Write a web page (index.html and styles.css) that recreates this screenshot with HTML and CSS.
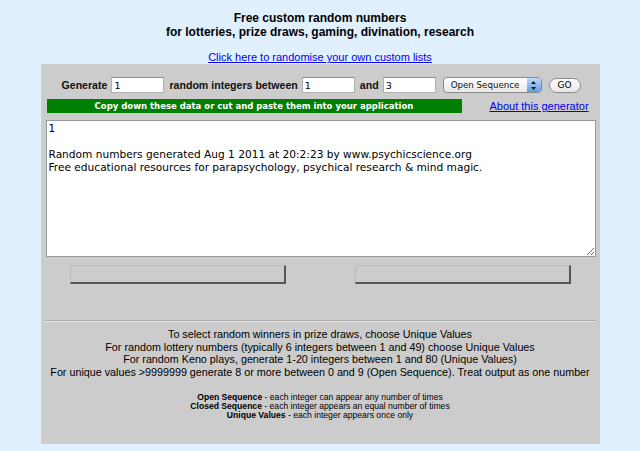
FILE: index.html
```html
<!DOCTYPE html>
<html lang="en">
<head>
  <meta charset="UTF-8">
  <title>Free custom random numbers</title>
  <link rel="stylesheet" href="styles.css">
</head>
<body>

<h1 class="title">Free custom random numbers<br>for lotteries, prize draws, gaming, divination, research</h1>

<p class="lists-link"><a href="#">Click here to randomise your own custom lists</a></p>

<div class="panel">
  <form class="gen-row">
    <label for="count">Generate</label>
    <input type="text" id="count" class="num" value="1">
    <label for="low">random integers between</label>
    <input type="text" id="low" class="num" value="1">
    <label for="high">and</label>
    <input type="text" id="high" class="num" value="3">
    <span class="select">Open Sequence<span class="arrows"><svg width="7" height="11" viewBox="0 0 7 11"><path d="M3.5 1 L6 4 H1 Z M3.5 10 L6 7 H1 Z" fill="#1a1a1a"/></svg></span></span>
    <button type="button" class="go">GO</button>
  </form>

  <div class="info-row">
    <div class="copy-bar">Copy down these data or cut and paste them into your application</div>
    <a href="#" class="about">About this generator</a>
  </div>

  <textarea class="output">1

Random numbers generated Aug 1 2011 at 20:2:23 by www.psychicscience.org
Free educational resources for parapsychology, psychical research &amp; mind magic.</textarea>

  <div class="blank-buttons">
    <button type="button" class="blank"></button>
    <button type="button" class="blank"></button>
  </div>

  <hr class="rule">

  <p class="tips">
    To select random winners in prize draws, choose Unique Values<br>
    For random lottery numbers (typically 6 integers between 1 and 49) choose Unique Values<br>
    For random Keno plays, generate 1-20 integers between 1 and 80 (Unique Values)<br>
    For unique values &gt;9999999 generate 8 or more between 0 and 9 (Open Sequence). Treat output as one number
  </p>

  <p class="legend">
    <b>Open Sequence</b> - each integer can appear any number of times<br>
    <b>Closed Sequence</b> - each integer appears an equal number of times<br>
    <b>Unique Values</b> - each integer appears once only
  </p>
</div>

</body>
</html>
```

FILE: styles.css
```css
body {
  margin: 0;
  background-color: #e0f0ff;
  font-family: 'Liberation Sans', Arial, sans-serif;
  color: #000;
}

.title {
  font-size: 12px;
  font-weight: bold;
  text-align: center;
  line-height: 14px;
  margin: 11px 0 0 0;
}

.lists-link {
  text-align: center;
  font-size: 11px;
  margin: 11px 0 0 0;
  line-height: 14px;
}

.lists-link a, .about {
  color: #0000ee;
}

.panel {
  width: 559px;
  margin: 0 auto;
  background-color: #cccccc;
  padding: 13px 0 1px 0;
  height: 366px;
}

.gen-row {
  display: flex;
  align-items: center;
  margin-left: 21px;
  white-space: nowrap;
  font-size: 10.6px;
  font-weight: bold;
  color: #111;
}

.gen-row label {
  margin-right: 4px;
}

.num {
  width: 53px;
  height: 16px;
  box-sizing: border-box;
  padding: 0 2px;
  margin: 0 5px 0 0;
  border: 1px solid #b0b0b0;
  border-top-color: #8c8c8c;
  font-family: 'DejaVu Sans', sans-serif;
  font-size: 9.5px;
  font-weight: normal;
}

.select {
  display: inline-flex;
  align-items: center;
  justify-content: space-between;
  width: 99px;
  height: 16px;
  margin-left: 2px;
  padding-left: 7px;
  box-sizing: border-box;
  border: 1px solid #8a8a8a;
  border-radius: 4px;
  background: linear-gradient(#ffffff, #e8e8e8);
  font-family: 'DejaVu Sans', sans-serif;
  font-weight: normal;
  font-size: 8.7px;
  overflow: hidden;
}

.arrows {
  display: flex;
  align-items: center;
  justify-content: center;
  width: 14px;
  height: 16px;
  background: linear-gradient(#c4ddf7, #5c9ae0);
}

.go {
  margin-left: 7px;
  width: 32px;
  height: 15px;
  padding: 0;
  border: 1px solid #8a8a8a;
  border-radius: 8px;
  background: linear-gradient(#ffffff, #e6e6e6);
  font-family: 'DejaVu Sans', sans-serif;
  font-size: 9px;
  color: #000;
}

.info-row {
  display: flex;
  align-items: center;
  margin: 6px 0 0 6px;
}

.copy-bar {
  width: 415px;
  height: 14px;
  line-height: 14px;
  background-color: #008000;
  color: #fff;
  font-family: 'DejaVu Sans', sans-serif;
  font-size: 8.5px;
  font-weight: bold;
  text-align: center;
}

.about {
  margin-left: 28px;
  font-size: 11px;
}

.output {
  display: block;
  width: 550px;
  height: 137px;
  box-sizing: border-box;
  margin: 7px 0 0 5px;
  padding: 1px 2px;
  border: 1px solid #999;
  resize: both;
  font-family: 'DejaVu Sans', sans-serif;
  font-size: 10.6px;
  line-height: 13px;
  color: #000;
}

.blank-buttons {
  display: flex;
  gap: 69px;
  padding-left: 29px;
  margin-top: 8px;
}

.blank {
  width: 216px;
  height: 19px;
  padding: 0;
  background-color: #cccccc;
  border-style: solid;
  border-width: 1px 2px 2px 1px;
  border-color: #bbbbbb #555555 #555555 #bbbbbb;
}

.rule {
  margin: 36px 4px 0 4px;
  border: 0;
  border-top: 1px solid #aaaaaa;
  border-bottom: 1px solid #e4e4e4;
}

.tips {
  text-align: center;
  font-size: 10.75px;
  line-height: 12.7px;
  margin: 6px 0 0 0;
}

.legend {
  text-align: center;
  font-size: 8.6px;
  line-height: 9px;
  margin: 14px 0 0 0;
}
```
